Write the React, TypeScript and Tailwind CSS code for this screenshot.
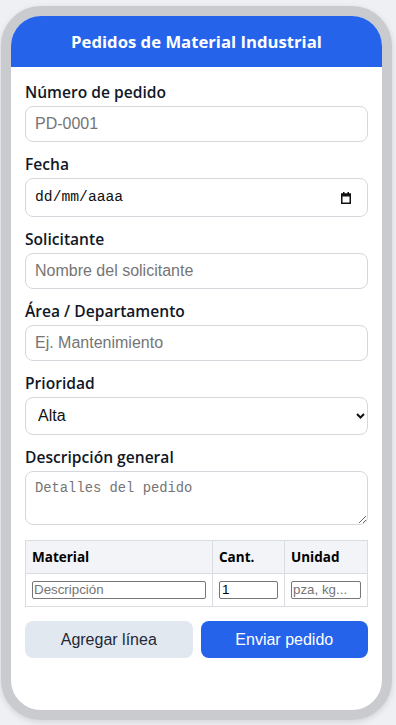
import React, { useState } from 'react';

const sans = { fontFamily: '"Open Sans", "Noto Sans", sans-serif' };

const Field: React.FC<{ label: string; children: React.ReactNode }> = ({ label, children }) => (
  <div className="mb-[12px]">
    <label className="block text-[15.6px] leading-[20px] font-semibold text-[#111827] mb-[4px]" style={sans}>
      {label}
    </label>
    {children}
  </div>
);

const inputCls =
  "block w-full h-[36px] px-[9px] rounded-[8px] border border-[#d4d7dc] bg-white text-[16px] text-[#111] placeholder:text-[#757575] outline-none font-['Liberation_Sans',Arial,sans-serif]";

export default function App() {
  const [prioridad, setPrioridad] = useState('Alta');

  return (
    <div className="min-h-[725px] bg-[#eef0f3] pt-[6px] pl-[1px]">
      <div className="w-[391px] h-[714px] border-[10px] border-[#c9cbcf] rounded-[40px] overflow-hidden bg-white shadow-[0_2px_6px_rgba(0,0,0,0.12)]">
        <div
          className="h-[51px] bg-[#2563eb] flex items-center justify-center text-white font-bold text-[16.7px]"
          style={sans}
        >
          Pedidos de Material Industrial
        </div>

        <form className="px-[14px] pt-[15px]" onSubmit={(e) => e.preventDefault()}>
          <Field label="Número de pedido">
            <input className={inputCls} placeholder="PD-0001" />
          </Field>

          <Field label="Fecha">
            <div className="flex items-center justify-between h-[39px] pl-[9px] pr-[16px] rounded-[8px] border border-[#d4d7dc] bg-white">
              <span className="font-['Liberation_Mono',monospace] text-[14.7px] text-[#111]">dd/mm/aaaa</span>
              <svg width="10" height="12" viewBox="0 0 10 12" className="text-[#111]">
                <rect x="0.75" y="2.25" width="8.5" height="9" fill="none" stroke="currentColor" strokeWidth="1.5" />
                <rect x="0" y="1.5" width="10" height="3" fill="currentColor" />
                <rect x="2" y="0" width="1.5" height="2" fill="currentColor" />
                <rect x="6.5" y="0" width="1.5" height="2" fill="currentColor" />
              </svg>
            </div>
          </Field>

          <Field label="Solicitante">
            <input className={inputCls} placeholder="Nombre del solicitante" />
          </Field>

          <Field label="Área / Departamento">
            <input className={inputCls} placeholder="Ej. Mantenimiento" />
          </Field>

          <Field label="Prioridad">
            <div className="relative">
              <select
                value={prioridad}
                onChange={(e) => setPrioridad(e.target.value)}
                className="block w-full h-[38px] pl-[12px] pr-[24px] rounded-[8px] border border-[#d4d7dc] bg-white text-[16px] text-[#111] appearance-none outline-none font-['Liberation_Sans',Arial,sans-serif]"
              >
                <option>Baja</option>
                <option>Media</option>
                <option>Alta</option>
              </select>
              <svg width="9" height="6" viewBox="0 0 9 6" className="absolute right-[3px] top-[16px] pointer-events-none">
                <path d="M1 1l3.5 3.5L8 1" fill="none" stroke="#111" strokeWidth="2" />
              </svg>
            </div>
          </Field>

          <Field label="Descripción general">
            <textarea
              placeholder="Detalles del pedido"
              className="block w-full h-[54px] px-[9px] py-[8px] rounded-[8px] border border-[#d4d7dc] bg-white text-[13.8px] leading-[18px] placeholder:text-[#757575] outline-none font-['Liberation_Mono',monospace]"
            />
          </Field>

          <table className="w-full mt-[15px] border-collapse border border-[#d9dce1] text-left">
            <thead>
              <tr className="bg-[#f2f4f7] h-[33px]">
                <th className="w-[187px] px-[6px] border border-[#d9dce1] font-bold text-[13.5px] text-black" style={sans}>Material</th>
                <th className="w-[72px] px-[6px] border border-[#d9dce1] font-bold text-[13.5px] text-black" style={sans}>Cant.</th>
                <th className="px-[6px] border border-[#d9dce1] font-bold text-[13.5px] text-black" style={sans}>Unidad</th>
              </tr>
            </thead>
            <tbody>
              <tr className="h-[33px]">
                <td className="px-[6px] border border-[#d9dce1]">
                  <input
                    placeholder="Descripción"
                    className="block w-full h-[18px] px-[1px] border border-[#767676] rounded-[2px] text-[13.33px] placeholder:text-[#757575] font-['Liberation_Sans',Arial,sans-serif] outline-none"
                  />
                </td>
                <td className="px-[6px] border border-[#d9dce1]">
                  <input
                    defaultValue="1"
                    className="block w-full h-[18px] px-[2px] border border-[#767676] rounded-[2px] text-[13.33px] text-black font-['Liberation_Sans',Arial,sans-serif] outline-none"
                  />
                </td>
                <td className="px-[6px] border border-[#d9dce1]">
                  <input
                    placeholder="pza, kg..."
                    className="block w-full h-[18px] px-[1px] border border-[#767676] rounded-[2px] text-[13.33px] placeholder:text-[#757575] font-['Liberation_Sans',Arial,sans-serif] outline-none"
                  />
                </td>
              </tr>
            </tbody>
          </table>

          <div className="grid grid-cols-2 gap-[8px] mt-[14px]">
            <button
              type="button"
              className="h-[37px] rounded-[8px] bg-[#e2e8f0] text-[#1f2937] text-[16px] font-['Liberation_Sans',Arial,sans-serif]"
            >
              Agregar línea
            </button>
            <button
              type="submit"
              className="h-[37px] rounded-[8px] bg-[#2563eb] text-white text-[16px] font-['Liberation_Sans',Arial,sans-serif]"
            >
              Enviar pedido
            </button>
          </div>
        </form>
      </div>
    </div>
  );
}
